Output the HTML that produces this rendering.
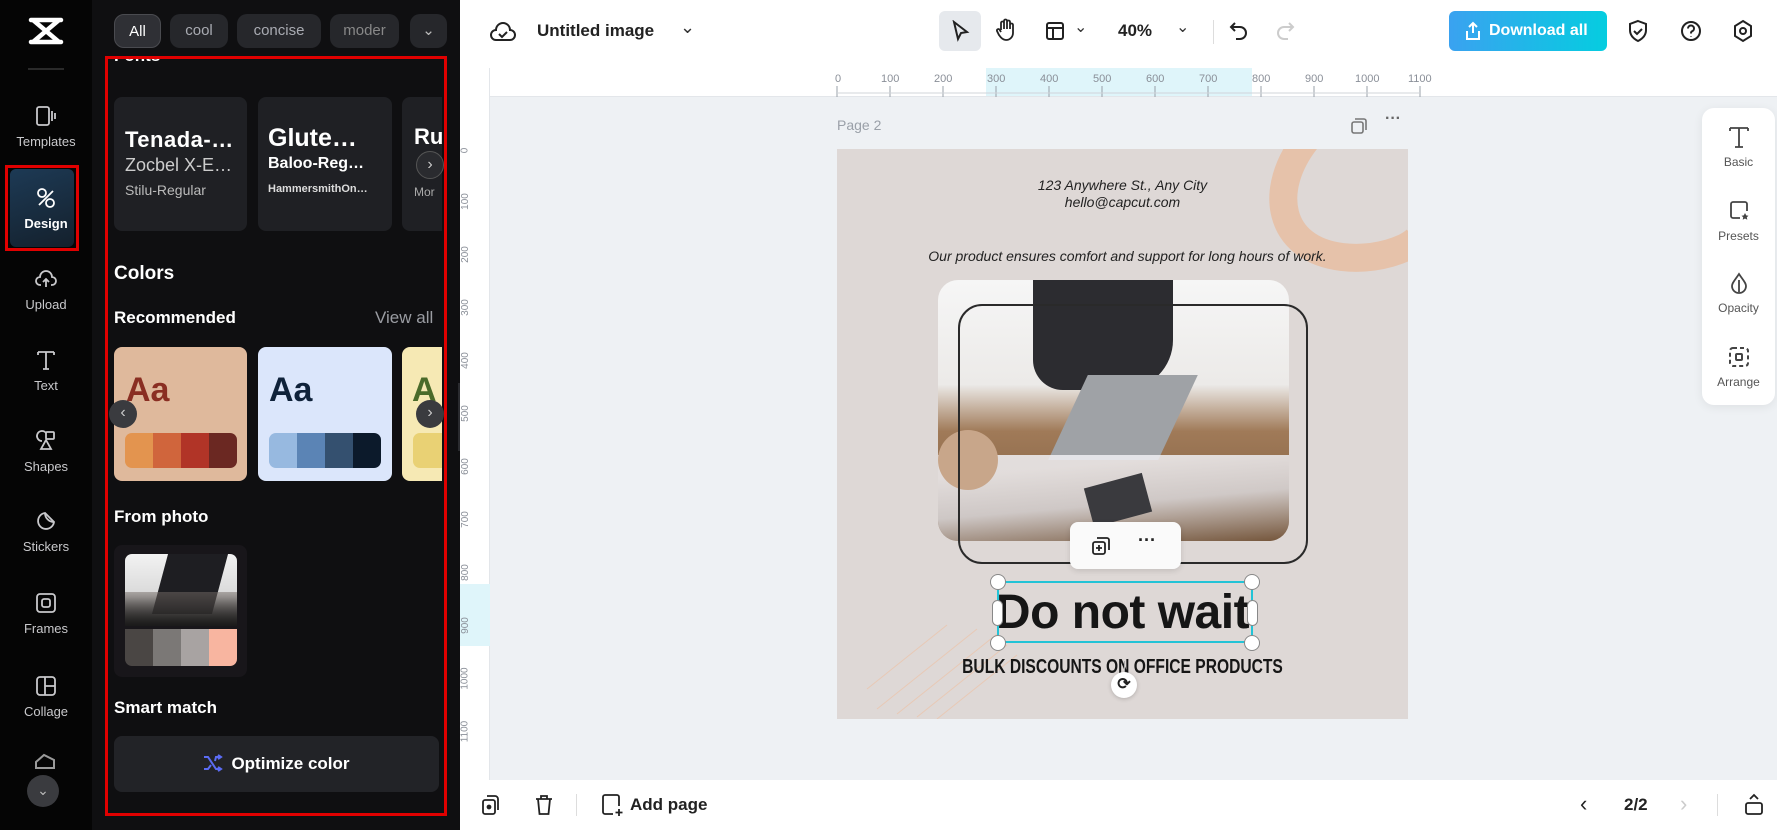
<!DOCTYPE html>
<html><head><meta charset="utf-8"><style>
*{box-sizing:border-box;margin:0;padding:0}
body{width:1777px;height:830px;overflow:hidden;font-family:"Liberation Sans",sans-serif;background:#eef1f4;position:relative}
.a{position:absolute}
.side{left:0;top:0;width:92px;height:830px;background:#050505}
.si{position:absolute;left:0;width:92px;text-align:center;color:#c9c9cc;font-size:13px}
.si svg{display:block;margin:0 auto 6px}
.panel{left:92px;top:0;width:368px;height:830px;background:#0f0f11}
.tag{position:absolute;top:14px;height:34px;border-radius:10px;background:#26272b;color:#a9abb2;font-size:15px;line-height:34px;text-align:center}
.card{position:absolute;background:#1f2024;border-radius:8px}
.h{position:absolute;color:#fff;font-weight:bold}
.top{left:460px;top:0;width:1317px;height:68px;background:#fff}
.ico{position:absolute}
.ruler{left:460px;top:68px;width:1317px;height:29px;background:#fff;border-bottom:1px solid #e3e6ea}
.vr{left:460px;top:68px;width:30px;height:712px;background:#fff;border-right:1px solid #e3e6ea}
.rl{position:absolute;font-size:11px;color:#8a8f98}
.bot{left:460px;top:780px;width:1317px;height:50px;background:#fff}
</style></head><body>

<div class="a side">
  <svg class="a" style="left:27px;top:16px" width="38" height="30" viewBox="0 0 38 30"><path d="M4 4 L34 4 M4 26 L34 26 M6 4 L32 26 M32 4 L6 26" stroke="#fff" stroke-width="4.5" fill="none" stroke-linecap="round"/></svg>
  <div class="a" style="left:28px;top:68px;width:36px;height:2px;background:#2a2a2a"></div>
  <div class="si" style="top:104px"><svg width="24" height="24" viewBox="0 0 24 24" fill="none" stroke="#c9c9cc" stroke-width="1.8"><rect x="3" y="3" width="12" height="18" rx="2"/><path d="M18 7v10M21 9v6"/></svg>Templates</div>
  <div class="a" style="left:5px;top:165px;width:74px;height:86px;border:3px solid #e00000;"></div>
  <div class="a" style="left:10px;top:169px;width:64px;height:78px;border-radius:6px;background:linear-gradient(160deg,#1d3a55,#14202c)"></div>
  <div class="si" style="top:186px;color:#fff;font-weight:bold"><svg width="24" height="24" viewBox="0 0 24 24" fill="none" stroke="#fff" stroke-width="1.8"><circle cx="8" cy="7" r="4"/><circle cx="16" cy="17" r="4"/><path d="M5 19l14-14M10 14l4-4"/></svg>Design</div>
  <div class="si" style="top:267px"><svg width="24" height="24" viewBox="0 0 24 24" fill="none" stroke="#c9c9cc" stroke-width="1.8"><path d="M7 18H6a4 4 0 0 1 0-8 6 6 0 0 1 12 0 4 4 0 0 1 0 8h-1M12 20v-8M9 15l3-3 3 3"/></svg>Upload</div>
  <div class="si" style="top:348px"><svg width="24" height="24" viewBox="0 0 24 24" fill="none" stroke="#c9c9cc" stroke-width="1.8"><path d="M4 4h16M12 4v17M9 21h6M4 4v3M20 4v3"/></svg>Text</div>
  <div class="si" style="top:429px"><svg width="24" height="24" viewBox="0 0 24 24" fill="none" stroke="#c9c9cc" stroke-width="1.8"><path d="M8 12a5 5 0 1 1 4-8"/><rect x="12" y="3" width="8" height="7" rx="1"/><path d="M12 11l5 9H7z"/></svg>Shapes</div>
  <div class="si" style="top:509px"><svg width="24" height="24" viewBox="0 0 24 24" fill="none" stroke="#c9c9cc" stroke-width="1.8"><path d="M20 13A8 8 0 1 1 11 4l9 9z"/><path d="M11 4c0 5 4 9 9 9"/></svg>Stickers</div>
  <div class="si" style="top:591px"><svg width="24" height="24" viewBox="0 0 24 24" fill="none" stroke="#c9c9cc" stroke-width="1.8"><rect x="3" y="3" width="18" height="18" rx="3"/><rect x="8" y="8" width="8" height="8" rx="2"/></svg>Frames</div>
  <div class="si" style="top:674px"><svg width="24" height="24" viewBox="0 0 24 24" fill="none" stroke="#c9c9cc" stroke-width="1.8"><rect x="3" y="3" width="18" height="18" rx="3"/><path d="M11 3v18M11 12h10"/></svg>Collage</div>
  <svg class="a" style="left:33px;top:752px" width="26" height="18" viewBox="0 0 26 18"><path d="M3 16V10l8-7 10 5v8z" fill="none" stroke="#9a9a9a" stroke-width="2"/></svg>
  <div class="a" style="left:27px;top:775px;width:32px;height:32px;border-radius:50%;background:#3a3b3f;color:#bbb;text-align:center;line-height:30px;font-size:14px">⌄</div>
</div>

<div class="a panel">
  <div class="tag" style="left:22px;width:47px;background:#2f3035;color:#fff;border:1px solid #4a4b50">All</div>
  <div class="tag" style="left:78px;width:58px">cool</div>
  <div class="tag" style="left:145px;width:84px">concise</div>
  <div class="tag" style="left:238px;width:69px;color:#888">moder</div>
  <div class="tag" style="left:318px;width:37px;color:#bbb">⌄</div>

  <div class="h" style="left:22px;top:56px;font-size:17px;height:10px;overflow:hidden;line-height:0">Fonts</div>
  <div class="card" style="left:22px;top:97px;width:133px;height:134px">
    <div style="position:absolute;left:11px;top:30px;color:#fff;font-weight:bold;font-size:22px;letter-spacing:0.5px">Tenada-…</div>
    <div style="position:absolute;left:11px;top:58px;color:#ccc;font-size:18px">Zocbel X-E…</div>
    <div style="position:absolute;left:11px;top:85px;color:#bbb;font-size:14px">Stilu-Regular</div>
  </div>
  <div class="card" style="left:166px;top:97px;width:134px;height:134px">
    <div style="position:absolute;left:10px;top:27px;color:#fff;font-weight:bold;font-size:25px">Glute…</div>
    <div style="position:absolute;left:10px;top:58px;color:#fff;font-weight:bold;font-size:16px">Baloo-Reg…</div>
    <div style="position:absolute;left:10px;top:86px;color:#ddd;font-weight:bold;font-size:11px">HammersmithOn…</div>
  </div>
  <div class="card" style="left:310px;top:97px;width:40px;height:134px;overflow:hidden;border-radius:8px 0 0 8px">
    <div style="position:absolute;left:12px;top:27px;color:#fff;font-weight:bold;font-size:22px">Ru</div>
    <div style="position:absolute;left:12px;top:88px;color:#aaa;font-size:12px">Mor</div>
  </div>
  <div class="a" style="left:324px;top:151px;width:28px;height:28px;border-radius:50%;background:#2a2b2f;border:1px solid #555;color:#ccc;text-align:center;line-height:25px;font-size:16px">›</div>

  <div class="h" style="left:22px;top:263px;font-size:19px">Colors</div>
  <div class="h" style="left:22px;top:308px;font-size:17px">Recommended</div>
  <div class="a" style="left:283px;top:308px;font-size:17px;color:#9a9ca2">View all</div>

  <div class="card" style="left:22px;top:347px;width:133px;height:134px;background:#dfb99c">
    <div style="position:absolute;left:12px;top:24px;color:#8a2e22;font-weight:bold;font-size:34px">Aa</div>
    <div style="position:absolute;left:11px;top:86px;width:112px;height:35px;border-radius:7px;overflow:hidden;display:flex"><i style="flex:1;background:#e3944f"></i><i style="flex:1;background:#d0653c"></i><i style="flex:1;background:#b13427"></i><i style="flex:1;background:#6b2822"></i></div>
  </div>
  <div class="card" style="left:166px;top:347px;width:134px;height:134px;background:#dbe6fb">
    <div style="position:absolute;left:11px;top:24px;color:#0f223a;font-weight:bold;font-size:34px">Aa</div>
    <div style="position:absolute;left:11px;top:86px;width:112px;height:35px;border-radius:7px;overflow:hidden;display:flex"><i style="flex:1;background:#97b9e0"></i><i style="flex:1;background:#5b84b5"></i><i style="flex:1;background:#34506f"></i><i style="flex:1;background:#0c1a2b"></i></div>
  </div>
  <div class="card" style="left:310px;top:347px;width:40px;height:134px;background:#f6e9b4;border-radius:8px 0 0 8px;overflow:hidden">
    <div style="position:absolute;left:10px;top:24px;color:#4a6b2a;font-weight:bold;font-size:34px">A</div>
    <div style="position:absolute;left:11px;top:86px;width:40px;height:35px;border-radius:7px 0 0 7px;background:#e9d174"></div>
  </div>
  <div class="a" style="left:17px;top:400px;width:28px;height:28px;border-radius:50%;background:#3a3b3f;color:#ccc;text-align:center;line-height:26px;font-size:16px">‹</div>
  <div class="a" style="left:324px;top:400px;width:28px;height:28px;border-radius:50%;background:#3a3b3f;color:#ccc;text-align:center;line-height:26px;font-size:16px">›</div>

  <div class="h" style="left:22px;top:507px;font-size:17px">From photo</div>
  <div class="card" style="left:22px;top:545px;width:133px;height:132px;background:#18161a">
    <div style="position:absolute;left:11px;top:9px;width:112px;height:72px;border-radius:7px 7px 0 0;overflow:hidden;background:linear-gradient(180deg,#f2f2f2 0%,#d8d8d8 60%,#303030 100%)">
      <div style="position:absolute;left:35px;top:0;width:60px;height:60px;background:#1e1e22;transform:skewX(-15deg)"></div>
      <div style="position:absolute;left:0;top:38px;width:112px;height:34px;background:linear-gradient(180deg,rgba(120,110,105,.5),#1a1a1a)"></div>
    </div>
    <div style="position:absolute;left:11px;top:84px;width:112px;height:37px;border-radius:0 0 7px 7px;overflow:hidden;display:flex"><i style="flex:1;background:#4a4644"></i><i style="flex:1;background:#7b7876"></i><i style="flex:1;background:#a8a3a2"></i><i style="flex:1;background:#f8b5a0"></i></div>
  </div>

  <div class="h" style="left:22px;top:698px;font-size:17px">Smart match</div>
  <div class="a" style="left:22px;top:736px;width:325px;height:56px;border-radius:8px;background:#222327;color:#fff;font-weight:bold;font-size:17px;text-align:center;line-height:56px">
    <svg style="vertical-align:-3px;margin-right:8px" width="20" height="18" viewBox="0 0 20 18" fill="none" stroke="#5b6cf5" stroke-width="2"><path d="M1 3h4l8 12h5M1 15h4l3-4M12 7l1-4h5M15 1l3 2-3 2M15 13l3 2-3 2"/></svg>Optimize color
  </div>
  <div class="a" style="left:13px;top:56px;width:342px;height:760px;border:3px solid #e00000"></div>
</div>
<div class="a" style="left:458px;top:383px;width:9px;height:68px;border-radius:0 6px 6px 0;background:#2a2b2f"></div>

<div class="a top">
  <svg class="ico" style="left:30px;top:20px" width="26" height="24" viewBox="0 0 26 24" fill="none" stroke="#222" stroke-width="2"><path d="M7 20H6a5 5 0 0 1 0-10 7 7 0 0 1 14 0 5 5 0 0 1 0 10z"/><path d="M9 14l3 3 5-5"/></svg>
  <div class="a" style="left:77px;top:21px;font-size:17px;color:#222;font-weight:bold">Untitled image</div>
  <div class="a" style="left:220px;top:17px;font-size:18px;color:#333">⌄</div>
  <div class="a" style="left:479px;top:11px;width:42px;height:40px;border-radius:6px;background:#e6e9ed"></div>
  <svg class="ico" style="left:490px;top:20px" width="20" height="22" viewBox="0 0 20 22" fill="none" stroke="#222" stroke-width="2"><path d="M4 2l13 10-6 1-3 6z"/></svg>
  <svg class="ico" style="left:535px;top:18px" width="22" height="24" viewBox="0 0 22 24" fill="none" stroke="#222" stroke-width="1.8"><path d="M6 12V5a1.5 1.5 0 0 1 3 0v6V3a1.5 1.5 0 0 1 3 0v8V4a1.5 1.5 0 0 1 3 0v7-4a1.5 1.5 0 0 1 3 0v8a7 7 0 0 1-7 7c-3 0-5-2-7-5l-2-4a1.5 1.5 0 0 1 2.5-1.5L6 14"/></svg>
  <svg class="ico" style="left:585px;top:21px" width="20" height="20" viewBox="0 0 20 20" fill="none" stroke="#222" stroke-width="2"><rect x="2" y="2" width="16" height="16" rx="2"/><path d="M2 7h16M8 7v11"/></svg>
  <div class="a" style="left:614px;top:17px;font-size:16px;color:#333">⌄</div>
  <div class="a" style="left:658px;top:21px;font-size:17px;color:#222;font-weight:bold">40%</div>
  <div class="a" style="left:716px;top:17px;font-size:16px;color:#333">⌄</div>
  <div class="a" style="left:753px;top:20px;width:1px;height:24px;background:#ddd"></div>
  <svg class="ico" style="left:769px;top:20px" width="20" height="22" viewBox="0 0 20 22" fill="none" stroke="#222" stroke-width="2"><path d="M6 3L2 7l4 4M2 7h9a6 6 0 0 1 0 12H7"/></svg>
  <svg class="ico" style="left:815px;top:20px" width="20" height="22" viewBox="0 0 20 22" fill="none" stroke="#ccc" stroke-width="2"><path d="M14 3l4 4-4 4M18 7H9a6 6 0 0 0 0 12h4"/></svg>
  <div class="a" style="left:989px;top:11px;width:158px;height:40px;border-radius:6px;background:linear-gradient(90deg,#3aa2f0,#05cde0);color:#fff;font-weight:bold;font-size:16px;line-height:40px;padding-left:40px">Download all</div>
  <svg class="ico" style="left:1004px;top:21px" width="18" height="20" viewBox="0 0 18 20" fill="none" stroke="#fff" stroke-width="2"><path d="M9 12V2M5 6l4-4 4 4M3 10v8h12v-8"/></svg>
  <svg class="ico" style="left:1167px;top:19px" width="22" height="24" viewBox="0 0 22 24" fill="none" stroke="#222" stroke-width="2"><path d="M11 2l8 3v6c0 6-4 9-8 11-4-2-8-5-8-11V5z"/><path d="M7 12l3 3 5-5"/></svg>
  <svg class="ico" style="left:1220px;top:20px" width="22" height="22" viewBox="0 0 22 22" fill="none" stroke="#222" stroke-width="2"><circle cx="11" cy="11" r="9"/><path d="M8 8.5a3 3 0 1 1 4 2.8c-1 .4-1 1.2-1 2.2M11 16v.5"/></svg>
  <svg class="ico" style="left:1272px;top:19px" width="22" height="24" viewBox="0 0 22 24" fill="none" stroke="#222" stroke-width="2"><path d="M11 2l8 5v10l-8 5-8-5V7z"/><circle cx="11" cy="12" r="3"/></svg>
</div>

<div class="a ruler">
  <div class="a" style="left:526px;top:0;width:266px;height:28px;background:#dff5fa"></div>
  <svg class="a" style="left:0;top:0" width="1317" height="29">
    <g stroke="#9aa0a8" stroke-width="1">
      <path d="M377 18v11 M430 18v11 M483 18v11 M536 18v11 M589 18v11 M642 18v11 M695 18v11 M748 18v11 M801 18v11 M854 18v11 M907 18v11 M960 18v11" />
      <path d="M377 25h583" stroke="#d0d4d9"/>
    </g>
  </svg>
  <div class="rl" style="left:375px;top:5px">0</div><div class="rl" style="left:421px;top:5px">100</div><div class="rl" style="left:474px;top:5px">200</div><div class="rl" style="left:527px;top:5px">300</div><div class="rl" style="left:580px;top:5px">400</div><div class="rl" style="left:633px;top:5px">500</div><div class="rl" style="left:686px;top:5px">600</div><div class="rl" style="left:739px;top:5px">700</div><div class="rl" style="left:792px;top:5px">800</div><div class="rl" style="left:845px;top:5px">900</div><div class="rl" style="left:895px;top:5px">1000</div><div class="rl" style="left:948px;top:5px">1100</div>
</div>
<div class="a vr">
  <div class="a" style="left:0;top:516px;width:30px;height:62px;background:#dff5fa"></div>
</div>
<div class="a" style="left:462px;top:140px;width:20px;font-size:10px;color:#8a8f98">
  <div class="a" style="top:5px;transform:rotate(-90deg)">0</div><div class="a" style="top:56px;left:-5px;transform:rotate(-90deg)">100</div><div class="a" style="top:109px;left:-5px;transform:rotate(-90deg)">200</div><div class="a" style="top:162px;left:-5px;transform:rotate(-90deg)">300</div><div class="a" style="top:215px;left:-5px;transform:rotate(-90deg)">400</div><div class="a" style="top:268px;left:-5px;transform:rotate(-90deg)">500</div><div class="a" style="top:321px;left:-5px;transform:rotate(-90deg)">600</div><div class="a" style="top:374px;left:-5px;transform:rotate(-90deg)">700</div><div class="a" style="top:427px;left:-5px;transform:rotate(-90deg)">800</div><div class="a" style="top:480px;left:-5px;transform:rotate(-90deg)">900</div><div class="a" style="top:533px;left:-8px;transform:rotate(-90deg)">1000</div><div class="a" style="top:586px;left:-8px;transform:rotate(-90deg)">1100</div>
</div>

<div class="a" style="left:837px;top:117px;font-size:14px;color:#9aa0a8">Page 2</div>
<svg class="a" style="left:1350px;top:117px" width="18" height="18" viewBox="0 0 18 18" fill="none" stroke="#777" stroke-width="1.6"><rect x="2" y="5" width="11" height="11" rx="2"/><path d="M5 2h9a2 2 0 0 1 2 2v9"/></svg>
<div class="a" style="left:1385px;top:110px;font-size:16px;color:#666;font-weight:bold">···</div>

<div class="a" style="left:837px;top:149px;width:571px;height:570px;background:#ded8d6;overflow:hidden">
  <svg class="a" style="left:0;top:0" width="571" height="570">
    <path d="M470 -10 C430 40 440 100 505 108 C540 112 571 100 580 90" fill="none" stroke="#e6c2aa" stroke-width="28"/>
    <g stroke="#efbfa0" stroke-width="1" opacity=".6"><path d="M40 560l100-80M60 565l100-80M80 568l90-72M100 570l80-64M30 540l80-64"/></g></svg>
  <div class="a" style="left:0;top:28px;width:571px;text-align:center;font-size:14px;font-style:italic;color:#222;line-height:17px">123 Anywhere St., Any City<br>hello@capcut.com</div>
  <div class="a" style="left:0;top:99px;width:571px;text-align:center;font-size:14px;font-style:italic;color:#222;padding-left:10px">Our product ensures comfort and support for long hours of work.</div>
  <div class="a" style="left:101px;top:131px;width:351px;height:261px;border-radius:20px;overflow:hidden;background:linear-gradient(180deg,#f6f6f6 0%,#eceae8 40%,#a07a58 58%,#7a5a3e 100%)">
    <div class="a" style="left:95px;top:0;width:140px;height:110px;background:#2c2c30;border-radius:0 0 50px 30px"></div>
    <div class="a" style="left:130px;top:95px;width:110px;height:85px;background:#9fa2a6;transform:skewX(-25deg)"></div>
    <div class="a" style="left:0;top:175px;width:351px;height:86px;background:linear-gradient(175deg,rgba(240,240,244,.85) 20%,rgba(225,225,230,.8) 55%,rgba(110,80,55,.5))"></div>
    <div class="a" style="left:150px;top:200px;width:60px;height:40px;background:#3a3a3e;transform:rotate(-15deg)"></div>
    <div class="a" style="left:0;top:150px;width:60px;height:60px;background:#c8a68a;border-radius:30px"></div>
  </div>
  <div class="a" style="left:121px;top:155px;width:350px;height:260px;border:2px solid #2a2a2a;border-radius:24px"></div>
  <div class="a" style="left:160px;top:432px;width:256px;height:62px;border:2px solid #22c3d6"></div>
  <div class="a" style="left:0;top:436px;width:571px;text-align:center;font-size:48px;font-weight:bold;color:#161616;letter-spacing:-0.5px">Do not wait</div>
  <div class="a" style="left:0;top:507px;width:571px;text-align:center;font-size:20px;font-weight:bold;color:#161616;transform:scaleX(0.78);transform-origin:50% 0">BULK DISCOUNTS ON OFFICE PRODUCTS</div>
</div>
<div class="a" style="left:1070px;top:522px;width:111px;height:47px;background:#fafafa;border-radius:8px;box-shadow:0 2px 6px rgba(0,0,0,.12)"></div>
<svg class="a" style="left:1091px;top:536px" width="20" height="20" viewBox="0 0 20 20" fill="none" stroke="#222" stroke-width="1.8"><rect x="2" y="6" width="12" height="12" rx="2"/><path d="M6 2h10a2 2 0 0 1 2 2v10M8 9v6M5 12h6"/></svg>
<div class="a" style="left:1138px;top:530px;font-size:18px;font-weight:bold;color:#222">···</div>
<div class="a" style="left:1124px;top:661px;width:1px;height:12px;background:#aaa"></div>
<div class="a" style="left:1111px;top:672px;width:26px;height:26px;border-radius:50%;background:#fff;box-shadow:0 1px 4px rgba(0,0,0,.2);text-align:center;line-height:26px;font-size:16px;color:#222;font-weight:bold">⟳</div>
<div class="a" style="left:990px;top:574px;width:16px;height:16px;border-radius:50%;background:#fff;border:1px solid #888"></div>
<div class="a" style="left:1244px;top:574px;width:16px;height:16px;border-radius:50%;background:#fff;border:1px solid #888"></div>
<div class="a" style="left:990px;top:635px;width:16px;height:16px;border-radius:50%;background:#fff;border:1px solid #888"></div>
<div class="a" style="left:1244px;top:635px;width:16px;height:16px;border-radius:50%;background:#fff;border:1px solid #888"></div>
<div class="a" style="left:992px;top:600px;width:11px;height:26px;border-radius:6px;background:#fff;border:1px solid #888"></div>
<div class="a" style="left:1247px;top:600px;width:11px;height:26px;border-radius:6px;background:#fff;border:1px solid #888"></div>

<div class="a" style="left:1702px;top:108px;width:73px;height:297px;background:#fff;border-radius:12px;box-shadow:0 2px 10px rgba(0,0,0,.07);text-align:center;font-size:12px;color:#555">
  <svg class="a" style="left:26px;top:17px" width="22" height="24" viewBox="0 0 22 24" fill="none" stroke="#444" stroke-width="1.8"><path d="M2 3h18M11 3v19M7 22h8M2 3v3M20 3v3"/></svg>
  <div class="a" style="left:0;top:47px;width:73px">Basic</div>
  <svg class="a" style="left:26px;top:91px" width="22" height="22" viewBox="0 0 22 22" fill="none" stroke="#444" stroke-width="1.8"><path d="M12 19H5a2 2 0 0 1-2-2V5a2 2 0 0 1 2-2h12a2 2 0 0 1 2 2v7"/><path d="M17 14l1.2 2.4 2.3.3-1.7 1.6.5 2.4-2.3-1.2-2.3 1.2.5-2.4-1.7-1.6 2.3-.3z" fill="#444" stroke="none"/></svg>
  <div class="a" style="left:0;top:121px;width:73px">Presets</div>
  <svg class="a" style="left:27px;top:164px" width="20" height="22" viewBox="0 0 20 22" fill="none" stroke="#444" stroke-width="1.8"><path d="M10 2C6 8 3 11 3 14a7 7 0 0 0 14 0c0-3-3-6-7-12z"/><path d="M10 8v12" /></svg>
  <div class="a" style="left:0;top:193px;width:73px">Opacity</div>
  <svg class="a" style="left:26px;top:238px" width="22" height="22" viewBox="0 0 22 22" fill="none" stroke="#444" stroke-width="2" stroke-dasharray="4 3"><rect x="2" y="2" width="18" height="18" rx="3"/></svg>
  <div class="a" style="left:33px;top:245px;width:8px;height:8px;border:2px solid #444;border-radius:2px"></div>
  <div class="a" style="left:0;top:267px;width:73px">Arrange</div>
</div>

<div class="a bot">
  <svg class="a" style="left:21px;top:14px" width="20" height="22" viewBox="0 0 20 22" fill="none" stroke="#222" stroke-width="1.8"><rect x="2" y="6" width="12" height="14" rx="2"/><path d="M6 2h8a3 3 0 0 1 3 3v11"/><circle cx="8" cy="13" r="1.5" fill="#222"/></svg>
  <svg class="a" style="left:74px;top:14px" width="20" height="22" viewBox="0 0 20 22" fill="none" stroke="#222" stroke-width="1.8"><path d="M2 5h16M7 5V2h6v3M4 5l1.5 15h9L16 5"/></svg>
  <div class="a" style="left:116px;top:14px;width:1px;height:22px;background:#ddd"></div>
  <svg class="a" style="left:140px;top:13px" width="24" height="24" viewBox="0 0 24 24" fill="none" stroke="#222" stroke-width="1.8"><path d="M13 21H5a2 2 0 0 1-2-2V4a2 2 0 0 1 2-2h12a2 2 0 0 1 2 2v9M19 16v7M15.5 19.5h7"/></svg>
  <div class="a" style="left:170px;top:15px;font-size:17px;font-weight:bold;color:#222">Add page</div>
  <div class="a" style="left:1120px;top:11px;font-size:22px;color:#222">‹</div>
  <div class="a" style="left:1164px;top:15px;font-size:17px;font-weight:bold;color:#222">2/2</div>
  <div class="a" style="left:1220px;top:11px;font-size:22px;color:#ccc">›</div>
  <div class="a" style="left:1257px;top:14px;width:1px;height:22px;background:#ddd"></div>
  <svg class="a" style="left:1284px;top:13px" width="20" height="24" viewBox="0 0 20 24" fill="none" stroke="#222" stroke-width="1.8"><rect x="2" y="10" width="16" height="11" rx="2"/><path d="M6 6l4-4 4 4"/></svg>
</div>
</body></html>
